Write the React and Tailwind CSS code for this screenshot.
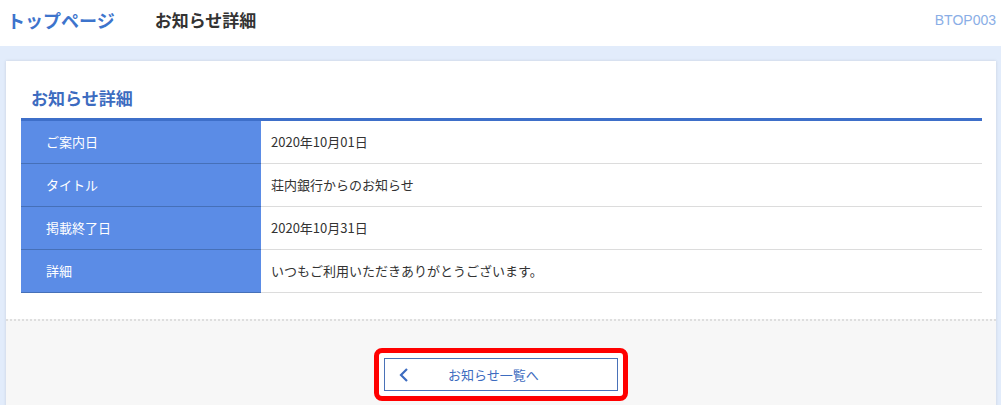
import React from 'react'

const ROWS = [
    { label: 'ご案内日', value: '2020年10月01日' },
    { label: 'タイトル', value: '荘内銀行からのお知らせ' },
    { label: '掲載終了日', value: '2020年10月31日' },
    { label: '詳細', value: 'いつもご利用いただきありがとうございます。' },
];

const App = () => {
    return (
        <div className="h-[405px] w-[1001px] overflow-hidden bg-[#e2ecfb] font-['Noto_Sans_CJK_JP',sans-serif]">
            {/* Header */}
            <header className="flex h-[46px] items-center bg-white pb-[6px] pl-[7px] pr-[5px]">
                <a className="text-[18px] font-bold text-[#3d74cc]">トップページ</a>
                <h1 className="ml-[40px] text-[17px] font-bold text-[#333]">お知らせ詳細</h1>
                <span className="ml-auto font-['Liberation_Sans',sans-serif] text-[14px] text-[#8aaee6]">BTOP003</span>
            </header>

            {/* Card */}
            <main className="ml-[6px] mr-[5px] mt-[15px] bg-white shadow-[0_0_3px_rgba(0,0,0,0.12)]">
                <div className="pl-[15px] pr-[14px] pt-[26px] pb-[26px]">
                    <h2 className="pl-[10px] text-[17px] font-bold leading-[22px] text-[#3d6cc0]">お知らせ詳細</h2>
                    <div className="mt-[9px] border-t-[3px] border-[#3e6fc9]">
                        {ROWS.map((row) => (
                            <div key={row.label} className="flex h-[43px] text-[13px]">
                                <div className="flex w-[240px] items-center border-b border-[#4670b8] bg-[#5b8ce6] pl-[25px] text-white">
                                    {row.label}
                                </div>
                                <div className="flex flex-1 items-center border-b border-[#dcdcdc] pl-[10px] text-[#333]">
                                    {row.value}
                                </div>
                            </div>
                        ))}
                    </div>
                </div>

                {/* Footer */}
                <div className="flex justify-center border-t-2 border-dotted border-[#dedede] bg-[#f7f7f7] pt-[27px] pb-[10px]">
                    <div className="rounded-[8px] border-[5px] border-[#ff0000] bg-white p-[5px]">
                        <button className="flex h-[33px] w-[234px] items-center border border-[#4a72b8] bg-white pl-[12px] text-[13px] text-[#3d6cc0]">
                            <svg width="14" height="16" viewBox="0 0 14 16" className="text-[#3d6cc0]">
                                <path d="M10 2 L4 8 L10 14" fill="none" stroke="currentColor" strokeWidth="2.2" />
                            </svg>
                            <span className="ml-[37px]">お知らせ一覧へ</span>
                        </button>
                    </div>
                </div>
            </main>
        </div>
    )
}

export default App
